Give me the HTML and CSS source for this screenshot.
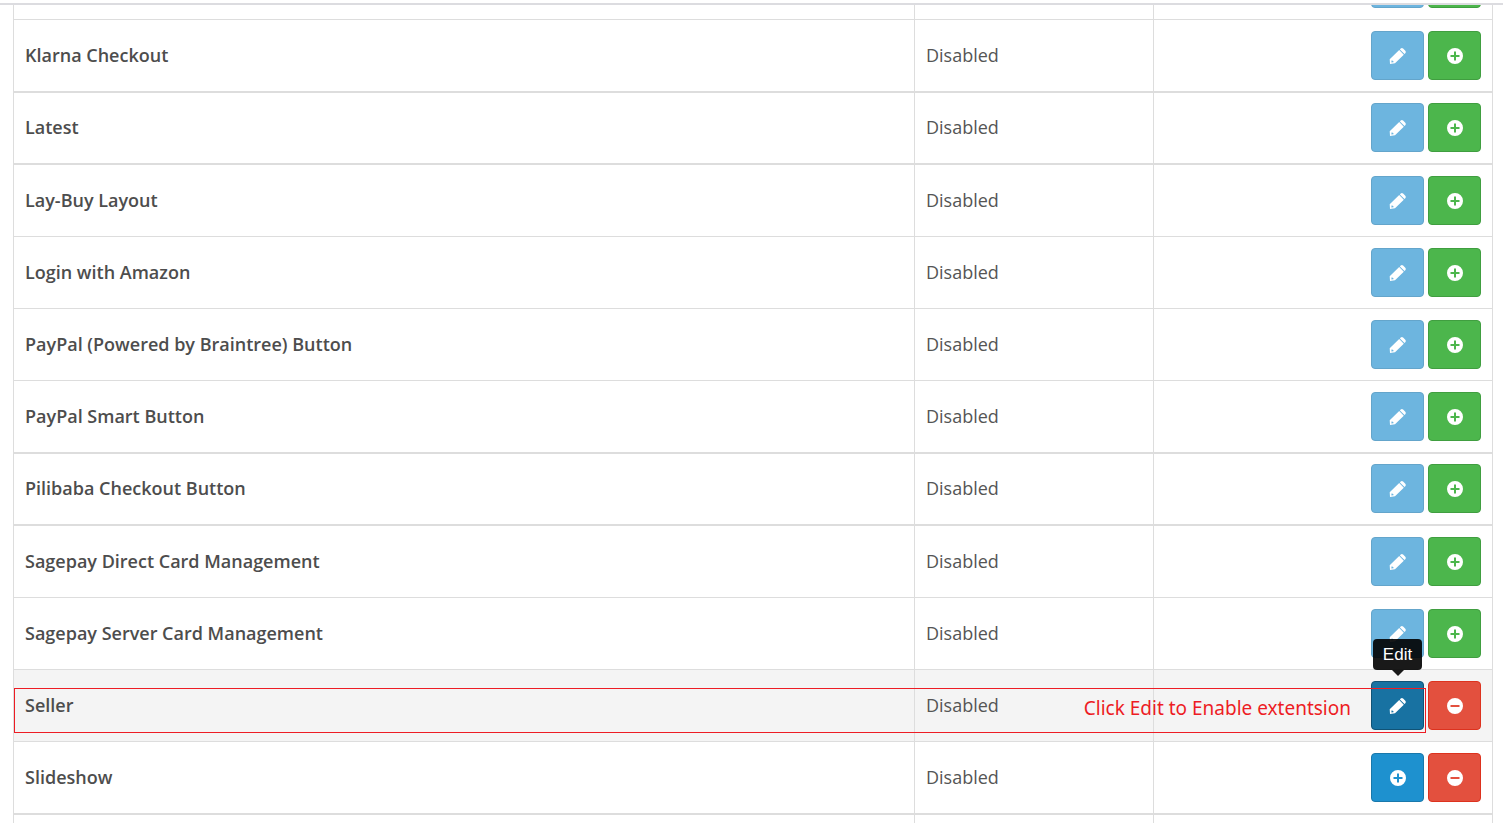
FILE: index.html
```
<!DOCTYPE html>
<html lang="en">
<head>
	<meta charset="UTF-8">
	<title>Extensions</title>
	<link rel="stylesheet" href="styles.css">
</head>
<body>
	<!-- icons shared by the action buttons -->
	<svg class="sprite" aria-hidden="true">
		<symbol id="pencil" viewBox="0 0 16 16">
			<path fill="#fff" fill-rule="evenodd" d="M10.7.6q1.2-1.2 2.4 0l2.2 2.2q1.2 1.2 0 2.4l-.8.8-4.6-4.6zM9.2 2.1l4.6 4.6L5 15.2 0 16l-.3-4.8zM1.5 12.4l-.1 2 2-.2v-1.1H2.6v-.7z"/>
		</symbol>
		<symbol id="plus" viewBox="0 0 16 16">
			<path fill="#fff" fill-rule="evenodd" d="M8 0a8 8 0 1 0 0 16A8 8 0 0 0 8 0zM7 3.5h2V7h3.5v2H9v3.5H7V9H3.5V7H7z"/>
		</symbol>
		<symbol id="minus" viewBox="0 0 16 16">
			<path fill="#fff" fill-rule="evenodd" d="M8 0a8 8 0 1 0 0 16A8 8 0 0 0 8 0zM3.5 7h9v2h-9z"/>
		</symbol>
	</svg>
	<div id="header"></div>
	<div id="content">
		<table class="table">
			<colgroup>
				<col>
				<col class="col-status">
				<col class="col-action">
			</colgroup>
			<tbody>
				<tr>
					<td></td>
					<td></td>
					<td><div class="actions">
						<button type="button" class="btn btn-primary" aria-label="Edit" disabled><svg><use href="#pencil"/></svg></button>
						<button type="button" class="btn btn-success" aria-label="Install"><svg><use href="#plus"/></svg></button>
					</div></td>
				</tr>
				<tr class="thick">
					<td><b>Klarna Checkout</b></td>
					<td>Disabled</td>
					<td><div class="actions">
						<button type="button" class="btn btn-primary" aria-label="Edit" disabled><svg><use href="#pencil"/></svg></button>
						<button type="button" class="btn btn-success" aria-label="Install"><svg><use href="#plus"/></svg></button>
					</div></td>
				</tr>
				<tr class="thick tight">
					<td><b>Latest</b></td>
					<td>Disabled</td>
					<td><div class="actions">
						<button type="button" class="btn btn-primary" aria-label="Edit" disabled><svg><use href="#pencil"/></svg></button>
						<button type="button" class="btn btn-success" aria-label="Install"><svg><use href="#plus"/></svg></button>
					</div></td>
				</tr>
				<tr>
					<td><b>Lay-Buy Layout</b></td>
					<td>Disabled</td>
					<td><div class="actions">
						<button type="button" class="btn btn-primary" aria-label="Edit" disabled><svg><use href="#pencil"/></svg></button>
						<button type="button" class="btn btn-success" aria-label="Install"><svg><use href="#plus"/></svg></button>
					</div></td>
				</tr>
				<tr>
					<td><b>Login with Amazon</b></td>
					<td>Disabled</td>
					<td><div class="actions">
						<button type="button" class="btn btn-primary" aria-label="Edit" disabled><svg><use href="#pencil"/></svg></button>
						<button type="button" class="btn btn-success" aria-label="Install"><svg><use href="#plus"/></svg></button>
					</div></td>
				</tr>
				<tr>
					<td><b>PayPal (Powered by Braintree) Button</b></td>
					<td>Disabled</td>
					<td><div class="actions">
						<button type="button" class="btn btn-primary" aria-label="Edit" disabled><svg><use href="#pencil"/></svg></button>
						<button type="button" class="btn btn-success" aria-label="Install"><svg><use href="#plus"/></svg></button>
					</div></td>
				</tr>
				<tr class="thick">
					<td><b>PayPal Smart Button</b></td>
					<td>Disabled</td>
					<td><div class="actions">
						<button type="button" class="btn btn-primary" aria-label="Edit" disabled><svg><use href="#pencil"/></svg></button>
						<button type="button" class="btn btn-success" aria-label="Install"><svg><use href="#plus"/></svg></button>
					</div></td>
				</tr>
				<tr class="thick tight">
					<td><b>Pilibaba Checkout Button</b></td>
					<td>Disabled</td>
					<td><div class="actions">
						<button type="button" class="btn btn-primary" aria-label="Edit" disabled><svg><use href="#pencil"/></svg></button>
						<button type="button" class="btn btn-success" aria-label="Install"><svg><use href="#plus"/></svg></button>
					</div></td>
				</tr>
				<tr>
					<td><b>Sagepay Direct Card Management</b></td>
					<td>Disabled</td>
					<td><div class="actions">
						<button type="button" class="btn btn-primary" aria-label="Edit" disabled><svg><use href="#pencil"/></svg></button>
						<button type="button" class="btn btn-success" aria-label="Install"><svg><use href="#plus"/></svg></button>
					</div></td>
				</tr>
				<tr>
					<td><b>Sagepay Server Card Management</b></td>
					<td>Disabled</td>
					<td><div class="actions">
						<button type="button" class="btn btn-primary" aria-label="Edit" disabled><svg><use href="#pencil"/></svg></button>
						<button type="button" class="btn btn-success" aria-label="Install"><svg><use href="#plus"/></svg></button>
					</div></td>
				</tr>
				<tr class="active">
					<td><b>Seller</b></td>
					<td>Disabled</td>
					<td>
						<div class="actions">
							<div class="tip-wrap">
								<button type="button" class="btn btn-primary hover" aria-label="Edit" aria-describedby="tip"><svg><use href="#pencil"/></svg></button>
								<div class="tooltip" id="tip" role="tooltip">Edit</div>
							</div>
							<button type="button" class="btn btn-danger" aria-label="Uninstall"><svg><use href="#minus"/></svg></button>
						</div>
						<div class="note">Click Edit to Enable extentsion</div>
					</td>
				</tr>
				<tr class="thick">
					<td><b>Slideshow</b></td>
					<td>Disabled</td>
					<td><div class="actions">
						<button type="button" class="btn btn-primary" aria-label="Add"><svg><use href="#plus"/></svg></button>
						<button type="button" class="btn btn-danger" aria-label="Uninstall"><svg><use href="#minus"/></svg></button>
					</div></td>
				</tr>
				<tr>
					<td></td>
					<td></td>
					<td></td>
				</tr>
			</tbody>
		</table>
	</div>
</body>
</html>
```
FILE: styles.css
```
* {
	box-sizing: border-box;
}
body {
	margin: 0;
	height: 100vh;
	overflow: hidden;
	background: #fff;
	color: #4d4d4d;
	font-family: "Open Sans", sans-serif;
	font-size: 18px;
	line-height: 26px;
}
.sprite {
	position: absolute;
	width: 0;
	height: 0;
}
.sprite symbol {
	overflow: visible;
}
#header {
	position: fixed;
	top: 0;
	left: 0;
	right: 0;
	z-index: 5;
	height: 5px;
	background: #fff;
	border-bottom: 2px solid #dcdce0;
}
/* list is scrolled a little under the header */
#content {
	margin: -52px 10px 0 13px;
}
.table {
	width: 100%;
	table-layout: fixed;
	border-collapse: separate;
	border-spacing: 0;
	border-right: 1px solid #ddd;
}
.col-status {
	width: 239px;
}
.col-action {
	width: 339px;
}
.table td {
	padding: 11px 11px 13px;
	border-left: 1px solid #ddd;
	border-bottom: 1px solid #ddd;
	color: #555;
	vertical-align: middle;
}
.table td:last-child {
	padding-bottom: 11px;
}
.table b {
	color: #4d4d4d;
	font-weight: 600;
}
.table .thick td {
	border-bottom-width: 2px;
}
.table .tight td {
	padding-top: 10px;
}
.active {
	position: relative;
	background: #f4f4f4;
}
.actions {
	display: flex;
	justify-content: flex-end;
	gap: 4px;
}
.btn {
	display: flex;
	align-items: center;
	justify-content: center;
	width: 53px;
	height: 49px;
	padding: 1px 0 0 1px;
	border: 1px solid transparent;
	border-radius: 4px;
	cursor: pointer;
}
.btn svg {
	width: 16px;
	height: 16px;
	overflow: visible;
}
.btn-primary {
	background: #1e91cf;
	border-color: #1978ab;
}
.btn-primary:disabled {
	background: #6db5df;
	border-color: #64a5cb;
}
.btn-primary.hover {
	background: #1872a2;
	border-color: #115376;
}
.btn-success {
	background: #4cb64c;
	border-color: #409e40;
}
.btn-danger {
	background: #e3503e;
	border-color: #dd321e;
}
.tip-wrap {
	position: relative;
}
.tooltip {
	position: absolute;
	left: 2px;
	bottom: 60px;
	width: 49px;
	height: 31px;
	border-radius: 4px;
	background: rgba(0, 0, 0, 0.9);
	color: #fff;
	font-family: "Liberation Sans", sans-serif;
	font-size: 17px;
	line-height: 31px;
	text-align: center;
}
.tooltip:after {
	content: "";
	position: absolute;
	top: 100%;
	left: 50%;
	margin-left: -6px;
	border: 6px solid transparent;
	border-top-color: rgba(0, 0, 0, 0.9);
	border-bottom: 0;
}
.note {
	position: absolute;
	top: 18px;
	left: 1px;
	right: 66px;
	height: 45px;
	padding: 6px 74px 0 0;
	border: 1px solid #ed1c24;
	color: #ed1c24;
	font-family: "Noto Sans", sans-serif;
	font-size: 19px;
	text-align: right;
	pointer-events: none;
}
```
